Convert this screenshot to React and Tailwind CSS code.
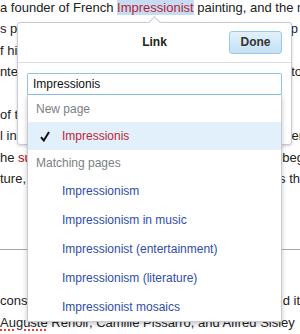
import { useState } from "react";

const link = "text-[#2f4cab]";

const results = [
  "Impressionism",
  "Impressionism in music",
  "Impressionist (entertainment)",
  "Impressionism (literature)",
  "Impressionist mosaics",
];

function Line({ left, right, rightShift = "mr-0" }) {
  return (
    <div className="flex h-[21.4px] items-center overflow-hidden whitespace-nowrap">
      <span>{left}</span>
      {right && <span className={`ml-auto ${rightShift}`}>{right}</span>}
    </div>
  );
}

function LinkPopup() {
  const [query, setQuery] = useState("Impressionis");

  return (
    <div className="absolute left-[17px] top-[22px] h-[123px] w-[275px] rounded-[3px] border border-[#c8ccd1] bg-white shadow-[0_1px_3px_rgba(0,0,0,0.18)]">
      <div className="absolute left-[132px] top-[-5px] h-[9px] w-[9px] rotate-45 border-l border-t border-[#c8ccd1] bg-white" />
      <div className="relative grid h-[40px] grid-cols-[1fr_auto_1fr] items-center border-b border-[#dcdfe3] pb-[1px]">
        <span />
        <h2 className="text-[12px] font-bold text-[#222]">Link</h2>
        <div className="flex justify-end pr-[9px]">
          <button
            type="button"
            className="h-[23px] w-[53px] rounded-[3px] border border-[#9cc8e6] bg-gradient-to-b from-[#e2f1fb] to-[#c4e1f4] text-[12px] font-bold text-[#333]"
          >
            Done
          </button>
        </div>
      </div>
      <div className="px-[9px] pt-[10px]">
        <div className="relative">
          <input
            className="block h-[22px] w-full rounded-t-[2px] border border-[#8fc3e8] px-[5px] text-[12px] text-[#111] outline-none"
            value={query}
            onChange={(e) => setQuery(e.target.value)}
          />
          <div className="absolute left-0 right-0 top-full z-10 border border-t-0 border-[#c8ccd1] bg-white text-[12px] shadow-[0_2px_5px_rgba(0,0,0,0.22)]">
            <div className="flex h-[27px] items-center pl-[8px] text-[#7b7f84]">New page</div>
            <div className="flex h-[28px] items-center bg-[#e1f0fb] pl-[12px]">
              <svg width="10" height="11" viewBox="0 0 10 11" className="mr-[12px]">
                <path d="M1 6.2 L3.8 9.5 L9 1" fill="none" stroke="#111" strokeWidth="2" />
              </svg>
              <span className="text-[#bf2539]">{query}</span>
            </div>
            <div className="flex h-[26px] items-center pl-[8px] text-[#7b7f84]">Matching pages</div>
            {results.map((r) => (
              <div key={r} className={`flex h-[29px] items-center pl-[34px] ${link}`}>
                {r}
              </div>
            ))}
          </div>
        </div>
      </div>
    </div>
  );
}

export default function App() {
  return (
    <div className="relative h-[334px] w-[300px] overflow-hidden bg-white font-['Liberation_Sans',Arial,sans-serif] text-[13px] text-[#222]">
      <div className="mt-[-3px]">
        <Line
          left={
            <>
              a founder of French{" "}
              <span className="bg-[#c7dbf3] text-[#b51f36]">Impressionist</span> painting, and the most
            </>
          }
        />
        <Line left="s perceptions before nature" right="p" rightShift="mr-[2px]" />
        <Line left="f his career" />
        <Line left={<span className="ml-[-3px]">inted the same scene</span>} right="to" rightShift="mr-[-2px]" />
        <Line left="" />
        <Line left="of the series" />
        <Line left="l in the style" right="er" rightShift="mr-[-3px]" />
        <Line
          left={
            <>
              he <span className="text-[#ba0000]">subject</span>
            </>
          }
          right="beg"
          rightShift="mr-[-4px]"
        />
        <Line left="ture, from which" right="s th" rightShift="mr-0" />
      </div>
      <hr className="mt-[59px] border-t border-[#a2a9b1]" />
      <div className="mt-[41px]">
        <Line left="considered" right="d it" rightShift="mr-0" />
        <Line
          left={
            <>
              <span className="underline decoration-[#e0443a] decoration-dotted decoration-2 underline-offset-[3px]">
                Auguste
              </span>{" "}
              Renoir, Camille Pissarro, and Alfred Sisley
            </>
          }
        />
      </div>
      <LinkPopup />
    </div>
  );
}
